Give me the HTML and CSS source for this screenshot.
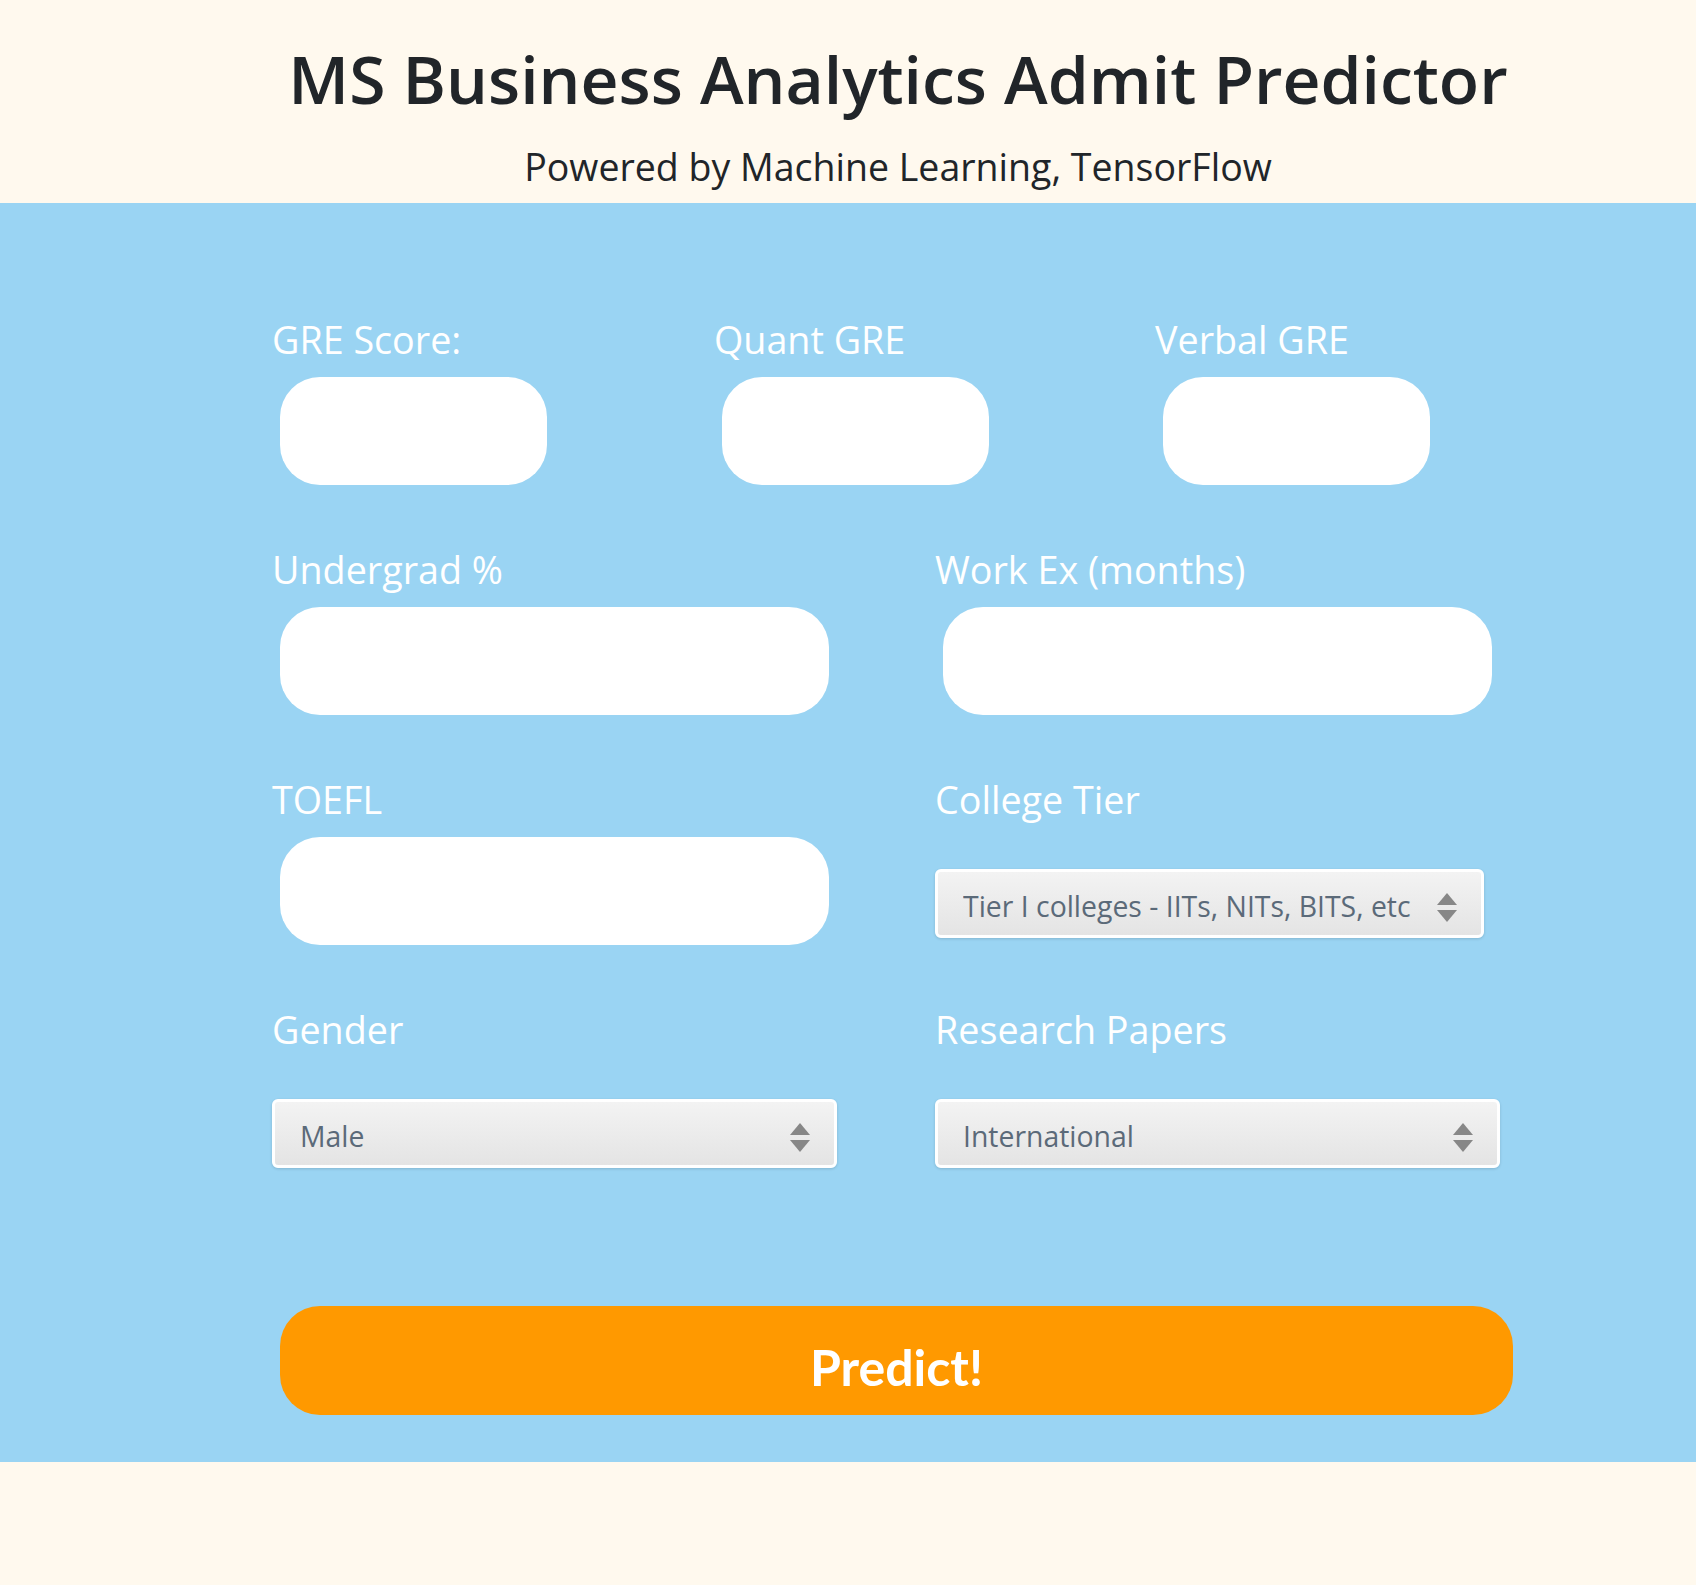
FILE: index.html
```html
<!DOCTYPE html>
<html lang="en">
<head>
<meta charset="utf-8">
<title>MS Business Analytics Admit Predictor</title>
<link rel="stylesheet" href="styles.css">
</head>
<body>
<header class="hero">
  <h1 class="hero-title">MS Business Analytics Admit Predictor</h1>
  <p class="hero-sub">Powered by Machine Learning, TensorFlow</p>
</header>
<main class="panel">
  <form class="predict-form">
    <div class="row row-3">
      <div class="field">
        <label class="field-label">GRE Score:</label>
        <input class="text-input input-sm" type="text">
      </div>
      <div class="field">
        <label class="field-label">Quant GRE</label>
        <input class="text-input input-sm" type="text">
      </div>
      <div class="field">
        <label class="field-label">Verbal GRE</label>
        <input class="text-input input-sm" type="text">
      </div>
    </div>
    <div class="row row-2">
      <div class="field">
        <label class="field-label">Undergrad %</label>
        <input class="text-input input-lg" type="text">
      </div>
      <div class="field">
        <label class="field-label">Work Ex (months)</label>
        <input class="text-input input-lg" type="text">
      </div>
    </div>
    <div class="row row-2">
      <div class="field">
        <label class="field-label">TOEFL</label>
        <input class="text-input input-lg" type="text">
      </div>
      <div class="field">
        <label class="field-label">College Tier</label>
        <div class="select-wrap select-narrow">
          <select class="select-box">
            <option>Tier I colleges - IITs, NITs, BITS, etc</option>
          </select>
          <svg class="select-arrows" width="20" height="29" viewBox="0 0 20 29"><polygon points="0,12 10,0 20,12" fill="#878787"/><polygon points="0,17 20,17 10,29" fill="#878787"/></svg>
        </div>
      </div>
    </div>
    <div class="row row-2 row-last">
      <div class="field">
        <label class="field-label">Gender</label>
        <div class="select-wrap select-wide">
          <select class="select-box">
            <option>Male</option>
          </select>
          <svg class="select-arrows" width="20" height="29" viewBox="0 0 20 29"><polygon points="0,12 10,0 20,12" fill="#878787"/><polygon points="0,17 20,17 10,29" fill="#878787"/></svg>
        </div>
      </div>
      <div class="field">
        <label class="field-label">Research Papers</label>
        <div class="select-wrap select-wide">
          <select class="select-box">
            <option>International</option>
          </select>
          <svg class="select-arrows" width="20" height="29" viewBox="0 0 20 29"><polygon points="0,12 10,0 20,12" fill="#878787"/><polygon points="0,17 20,17 10,29" fill="#878787"/></svg>
        </div>
      </div>
    </div>
    <button class="predict-btn" type="button">Predict!</button>
  </form>
</main>
</body>
</html>
```

FILE: styles.css
```css
* { box-sizing: border-box; }

html, body {
  margin: 0;
  padding: 0;
}

body {
  background: #fff9ee;
  font-family: "Open Sans", "Noto Sans", sans-serif;
  color: #212529;
  min-height: 1585px;
}

.hero {
  height: 203px;
  padding: 37px 0 0 100px;
  text-align: center;
}

.hero-title {
  margin: 0;
  font-size: 66px;
  line-height: 82px;
  font-weight: 600;
  color: #212529;
}

.hero-sub {
  margin: 26px 0 0;
  font-size: 37.5px;
  line-height: 44px;
  font-weight: 400;
  color: #212529;
}

.panel {
  background: #9ad4f3;
  height: 1259px;
  padding-top: 115px;
}

.predict-form {
  padding-left: 272px;
}

.row {
  display: grid;
  margin-bottom: 63px;
}

.row-3 { grid-template-columns: 442px 441px 441px; }
.row-2 { grid-template-columns: 663px 663px; }
.row-last { margin-bottom: 0; }

.field {
  display: flex;
  flex-direction: column;
  align-items: flex-start;
}

.field-label {
  display: block;
  font-size: 37.7px;
  line-height: 44px;
  color: #ffffff;
  font-weight: 400;
}

.text-input {
  display: block;
  margin: 15px 0 0 8px;
  height: 108px;
  border: none;
  border-radius: 40px;
  background: #ffffff;
  outline: none;
}

.input-sm { width: 267px; }
.input-lg { width: 549px; }

.select-wrap {
  position: relative;
  margin-top: 47px;
  height: 69px;
}

.select-wide { width: 565px; }
.select-narrow { width: 549px; }

.select-box {
  -webkit-appearance: none;
  appearance: none;
  width: 100%;
  height: 69px;
  border: 3px solid #ffffff;
  border-radius: 6px;
  background: linear-gradient(#f3f3f3, #e4e4e4);
  box-shadow: 0 1px 3px rgba(0, 0, 0, 0.15);
  font-family: "Open Sans", "Noto Sans", sans-serif;
  font-size: 28.4px;
  color: #5b6a79;
  padding: 4px 60px 0 25px;
  outline: none;
}

.select-arrows {
  position: absolute;
  right: 27px;
  top: 24px;
  pointer-events: none;
}

.predict-btn {
  display: block;
  margin: 138px 0 0 8px;
  width: 1233px;
  height: 109px;
  border: none;
  border-radius: 40px;
  background: #ff9900;
  color: #ffffff;
  font-family: "Lato", "Open Sans", sans-serif;
  font-weight: 700;
  font-size: 50px;
  padding: 12px 0 0;
  cursor: pointer;
}
```
